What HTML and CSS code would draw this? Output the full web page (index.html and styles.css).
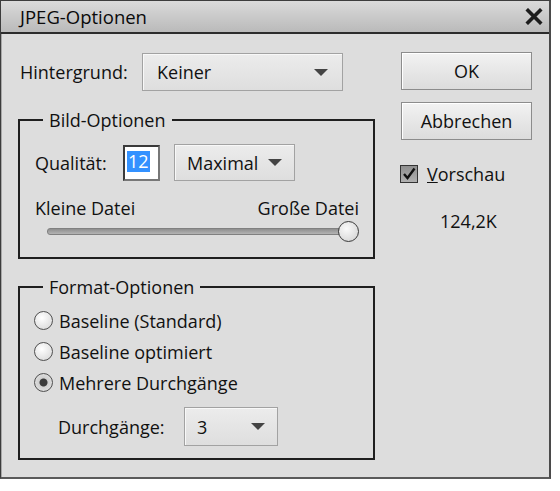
FILE: index.html
```html
<!DOCTYPE html>
<html lang="de">
<head>
<meta charset="utf-8">
<title>JPEG-Optionen</title>
<link rel="stylesheet" href="styles.css">
</head>
<body>
<div class="dialog">
  <div class="titlebar">
    <span class="title">JPEG-Optionen</span>
    <svg class="close" width="18" height="17" viewBox="0 0 18 17"><path d="M3 2.5 L15 14.5 M15 2.5 L3 14.5" stroke="#1c1c1c" stroke-width="3.6" stroke-linecap="square" fill="none"/></svg>
  </div>
  <div class="main">
    <div class="left">
      <div class="row-bg">
        <span class="lbl-bg">Hintergrund:</span>
        <div class="select sel-bg"><span>Keiner</span><span class="arrow"></span></div>
      </div>
      <fieldset class="group g1">
        <legend>Bild-Optionen</legend>
        <div class="row-q">
          <span class="lbl-q">Qualität:</span>
          <div class="numbox"><span class="sel-text">12</span></div>
          <div class="select sel-max"><span>Maximal</span><span class="arrow"></span></div>
        </div>
        <div class="row-size"><span>Kleine Datei</span><span>Große Datei</span></div>
        <div class="slider"><div class="track"></div><div class="thumb"></div></div>
      </fieldset>
      <fieldset class="group g2">
        <legend>Format-Optionen</legend>
        <div class="radio-row"><span class="radio"></span><span>Baseline (Standard)</span></div>
        <div class="radio-row"><span class="radio"></span><span>Baseline optimiert</span></div>
        <div class="radio-row"><span class="radio on"></span><span>Mehrere Durchgänge</span></div>
        <div class="row-pass">
          <span class="lbl-pass">Durchgänge:</span>
          <div class="select sel-pass"><span>3</span><span class="arrow"></span></div>
        </div>
      </fieldset>
    </div>
    <div class="right">
      <div class="btn">OK</div>
      <div class="btn btn2">Abbrechen</div>
      <div class="check-row">
        <span class="checkbox"><svg width="16" height="16" viewBox="0 0 16 16"><path d="M3 8 L6.5 12 L13.5 2.5" stroke="#111" stroke-width="2.4" fill="none"/></svg></span>
        <span><u>V</u>orschau</span>
      </div>
      <div class="size">124,2K</div>
    </div>
  </div>
</div>
</body>
</html>
```

FILE: styles.css
```css
html, body { margin: 0; padding: 0; background: #ffffff; }
body { font-family: "Open Sans", "Noto Sans", sans-serif; font-size: 18px; color: #111111; }

.dialog {
  width: 551px; height: 479px; box-sizing: border-box;
  border: 1px solid #3c3c3c;
  border-right: 2px solid #4a4a4a;
  border-bottom: 2px solid #5a5a5a;
  background: #dddddd;
  box-shadow: inset 1px 0 0 #a8a8a8;
}
.titlebar {
  height: 31px;
  border-bottom: 2px solid #2c2c2c;
  background: linear-gradient(#dadada, #bababa);
  display: flex; align-items: center; justify-content: space-between;
  padding: 0 6px 0 19px;
}
.title { font-size: 18.5px; line-height: 24px; color: #0a0a0a; }
.close { display: block; }

.main { display: flex; padding: 18px 0 0 17px; }
.left { width: 357px; }
.right { width: 131px; margin-left: 26px; }

.row-bg { display: flex; align-items: center; height: 38px; margin-top: 1px; }
.lbl-bg { width: 122px; margin-left: 2px; }

.select {
  box-sizing: border-box;
  border: 1px solid #a2a2a2;
  background: linear-gradient(#ececec, #dedede);
  box-shadow: inset 1px 1px 0 #f8f8f8;
  display: flex; align-items: center; justify-content: space-between;
  padding: 0 14px 0 14px;
}
.arrow { width: 0; height: 0; border-left: 7px solid transparent; border-right: 7px solid transparent; border-top: 7px solid #444; }
.sel-bg { width: 201px; height: 38px; }

.group {
  margin: 17px 0 0 0; border: 2px solid #1f1f1f; padding: 12px 14px 15px 15px;
  width: 357px; box-sizing: border-box;
}
.group legend { line-height: 24px; padding: 0 6px; margin-left: 8px; font-size: 18px; }
.g2 { margin-top: 16px; padding-top: 6px; padding-bottom: 12px; }

.row-q { display: flex; align-items: center; height: 37px; }
.lbl-q { width: 88px; }
.numbox {
  width: 37px; height: 36px; box-sizing: border-box;
  border: 2px solid #3a3a3a; border-right-color: #777; border-bottom-color: #777;
  background: #fff; padding: 2px 0 0 2px;
}
.sel-text { display: inline-block; background: #3391ff; color: #fff; line-height: 21px; padding: 0 1px; font-size: 18px; }
.sel-max { width: 121px; height: 37px; margin-left: 14px; padding: 0 12px 0 12px; }

.row-size { display: flex; justify-content: space-between; margin-top: 15px; line-height: 24px; }
.slider { display: flex; align-items: center; height: 21px; margin-top: 1px; padding-left: 12px; }
.track {
  flex: 1; height: 5px; border-radius: 3px;
  background: linear-gradient(#8e8e8e, #b4b4b4); border: 1px solid #808080;
}
.thumb {
  width: 19px; height: 19px; border-radius: 50%;
  border: 1px solid #3a3a3a; background: radial-gradient(circle at 40% 35%, #fafafa, #d0d0d0);
  margin-left: -4px;
}

.radio-row { display: flex; align-items: center; height: 31px; }
.radio {
  width: 19px; height: 19px; border-radius: 50%; box-sizing: border-box;
  border: 1.5px solid #505050; background: radial-gradient(circle at 40% 35%, #ffffff, #d4d4d4);
  margin-right: 6px; margin-left: -1px;
}
.radio.on { background: radial-gradient(circle, #3a3a3a 0 3.5px, #cfcfcf 4.5px, #e8e8e8 100%); }

.row-pass { display: flex; align-items: center; height: 39px; margin-top: 9px; }
.lbl-pass { width: 126px; margin-left: 23px; }
.sel-pass { width: 94px; height: 39px; padding: 0 12px 0 12px; }

.btn {
  box-sizing: border-box; width: 131px; height: 38px;
  border: 1px solid #8c8c8c;
  background: linear-gradient(#f2f2f2, #dcdcdc);
  box-shadow: inset 1px 1px 0 #ffffff;
  display: flex; align-items: center; justify-content: center;
}
.btn2 { margin-top: 12px; }

.check-row { display: flex; align-items: center; height: 24px; margin-top: 22px; margin-left: -1px; }
.checkbox {
  width: 18px; height: 18px; box-sizing: border-box;
  border: 1px solid #333; background: linear-gradient(#8e8e8e, #b0b0b0);
  display: flex; align-items: center; justify-content: center; margin-right: 9px;
}
.checkbox svg { display: block; }
.size { margin-top: 23px; margin-left: 39px; line-height: 24px; }
```
